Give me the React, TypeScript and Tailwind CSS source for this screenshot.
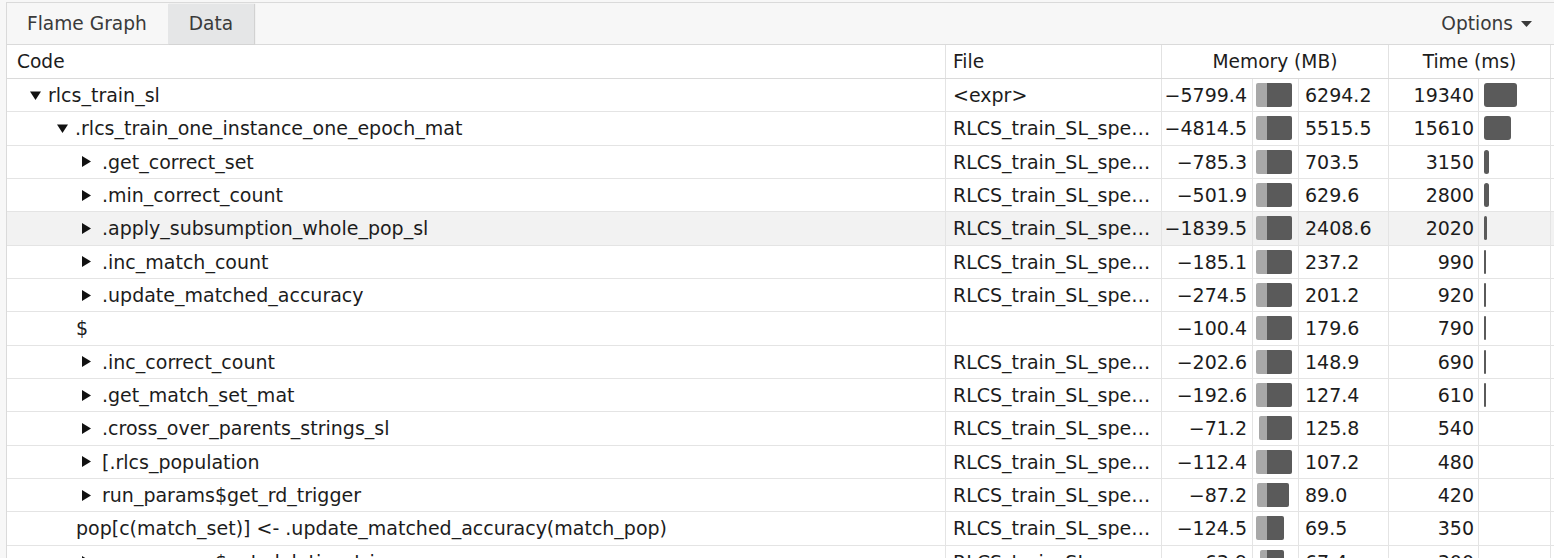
type Row = {
  name: string;
  indent: number;
  toggle?: "open" | "closed";
  file: string;
  neg: string;
  pos: string;
  time: number;
  hover?: boolean;
};

const rows: Row[] = [
  { name: "rlcs_train_sl", indent: 23, toggle: "open", file: "<expr>", neg: "5799.4", pos: "6294.2", time: 19340 },
  { name: ".rlcs_train_one_instance_one_epoch_mat", indent: 50, toggle: "open", file: "RLCS_train_SL_spe…", neg: "4814.5", pos: "5515.5", time: 15610 },
  { name: ".get_correct_set", indent: 75, toggle: "closed", file: "RLCS_train_SL_spe…", neg: "785.3", pos: "703.5", time: 3150 },
  { name: ".min_correct_count", indent: 75, toggle: "closed", file: "RLCS_train_SL_spe…", neg: "501.9", pos: "629.6", time: 2800 },
  { name: ".apply_subsumption_whole_pop_sl", indent: 75, toggle: "closed", file: "RLCS_train_SL_spe…", neg: "1839.5", pos: "2408.6", time: 2020, hover: true },
  { name: ".inc_match_count", indent: 75, toggle: "closed", file: "RLCS_train_SL_spe…", neg: "185.1", pos: "237.2", time: 990 },
  { name: ".update_matched_accuracy", indent: 75, toggle: "closed", file: "RLCS_train_SL_spe…", neg: "274.5", pos: "201.2", time: 920 },
  { name: "$", indent: 69, file: "", neg: "100.4", pos: "179.6", time: 790 },
  { name: ".inc_correct_count", indent: 75, toggle: "closed", file: "RLCS_train_SL_spe…", neg: "202.6", pos: "148.9", time: 690 },
  { name: ".get_match_set_mat", indent: 75, toggle: "closed", file: "RLCS_train_SL_spe…", neg: "192.6", pos: "127.4", time: 610 },
  { name: ".cross_over_parents_strings_sl", indent: 75, toggle: "closed", file: "RLCS_train_SL_spe…", neg: "71.2", pos: "125.8", time: 540 },
  { name: "[.rlcs_population", indent: 75, toggle: "closed", file: "RLCS_train_SL_spe…", neg: "112.4", pos: "107.2", time: 480 },
  { name: "run_params$get_rd_trigger", indent: 75, toggle: "closed", file: "RLCS_train_SL_spe…", neg: "87.2", pos: "89.0", time: 420 },
  { name: "pop[c(match_set)] <- .update_matched_accuracy(match_pop)", indent: 69, file: "RLCS_train_SL_spe…", neg: "124.5", pos: "69.5", time: 350 },
  { name: "run_params$get_deletion_trigger", indent: 75, toggle: "closed", file: "RLCS_train_SL_spe…", neg: "63.9", pos: "67.4", time: 300 },
];

const cols = "grid grid-cols-[939px_216px_91px_46px_90px_90px_72px]";

function Toggle({ kind }: { kind: "open" | "closed" }) {
  if (kind === "open") {
    return (
      <svg width="11" height="9" viewBox="0 0 11 9" className="mr-[7px] shrink-0">
        <path d="M0 0.5 L11 0.5 L5.5 9 Z" fill="#111" />
      </svg>
    );
  }
  return (
    <svg width="9" height="11" viewBox="0 0 9 11" className="mr-[11px] shrink-0">
      <path d="M0 0 L9 5.5 L0 11 Z" fill="#111" />
    </svg>
  );
}

function MemBar({ neg, pos }: { neg: string; pos: string }) {
  const l = Math.min(1, parseFloat(neg) / 100) * 11;
  const d = Math.min(1, parseFloat(pos) / 100) * 25;
  return (
    <div className="flex items-center pl-[3px]">
      <div className="flex w-[11px] justify-end">
        <div className="h-[24px] rounded-l-[2px] bg-[#a8a8a8]" style={{ width: l }} />
      </div>
      <div className="h-[24px] rounded-r-[2px] bg-[#5a5a5a]" style={{ width: d }} />
    </div>
  );
}

function TimeBar({ time }: { time: number }) {
  if (time < 600) return <div />;
  const w = Math.max(2, (time / 19340) * 33);
  return (
    <div className="flex items-center pl-[5px]">
      <div className="h-[24px] rounded-[3px] bg-[#5a5a5a]" style={{ width: w }} />
    </div>
  );
}

export default function App() {
  return (
    <div
      className="w-[1554px] h-[558px] overflow-hidden bg-[#f7f7f7] pt-[2px] pl-[6px] text-[19px] text-[#1c1c1c]"
      style={{ fontFamily: '"DejaVu Sans", "Noto Sans", sans-serif' }}
    >
      <div className="flex h-full flex-col border-l border-t border-[#dadada] bg-white">
        <div className="flex h-[42px] shrink-0 items-stretch border-b border-[#dadada] bg-[#f7f7f7] text-[18.6px] text-[#3a3a3a]">
          <div className="flex items-center pl-[20px] pr-[21px]">Flame Graph</div>
          <div className="mt-[1px] flex items-center bg-[#e5e6e7] px-[21px] shadow-[1px_0_1px_rgba(0,0,0,0.15)]">
            Data
          </div>
          <div className="ml-auto flex items-center pr-[22px]">
            Options
            <svg width="11" height="6" viewBox="0 0 11 6" className="ml-[8px]">
              <path d="M0 0 L11 0 L5.5 6 Z" fill="#3a3a3a" />
            </svg>
          </div>
        </div>

        <div className={`${cols} h-[34px] shrink-0 border-b border-[#dadada] text-[18.6px]`}>
          <div className="flex items-center border-r border-[#e2e2e2] pl-[10px]">Code</div>
          <div className="flex items-center border-r border-[#e2e2e2] pl-[7px]">File</div>
          <div className="col-span-3 flex items-center justify-center border-r border-[#e2e2e2]">Memory (MB)</div>
          <div className="col-span-2 flex items-center justify-center border-r border-[#e2e2e2]">Time (ms)</div>
        </div>

        {rows.map((r, i) => (
          <div
            key={i}
            className={`${cols} h-[33.33px] shrink-0 border-b border-[#e4e4e4] ${r.hover ? "bg-[#f2f2f2]" : ""}`}
          >
            <div className="flex items-center whitespace-nowrap border-r border-[#e4e4e4]" style={{ paddingLeft: r.indent }}>
              {r.toggle && <Toggle kind={r.toggle} />}
              {r.name}
            </div>
            <div className="flex items-center whitespace-nowrap border-r border-[#e4e4e4] pl-[7px]">{r.file}</div>
            <div className="flex items-center justify-end border-r border-[#e4e4e4] pr-[5px]">−{r.neg}</div>
            <div className="flex items-center border-r border-[#e4e4e4]">
              <MemBar neg={r.neg} pos={r.pos} />
            </div>
            <div className="flex items-center border-r border-[#e4e4e4] pl-[6px]">{r.pos}</div>
            <div className="flex items-center justify-end border-r border-[#e4e4e4] pr-[4px]">{r.time}</div>
            <div className="flex border-r border-[#e4e4e4]">
              <TimeBar time={r.time} />
            </div>
          </div>
        ))}
      </div>
    </div>
  );
}
